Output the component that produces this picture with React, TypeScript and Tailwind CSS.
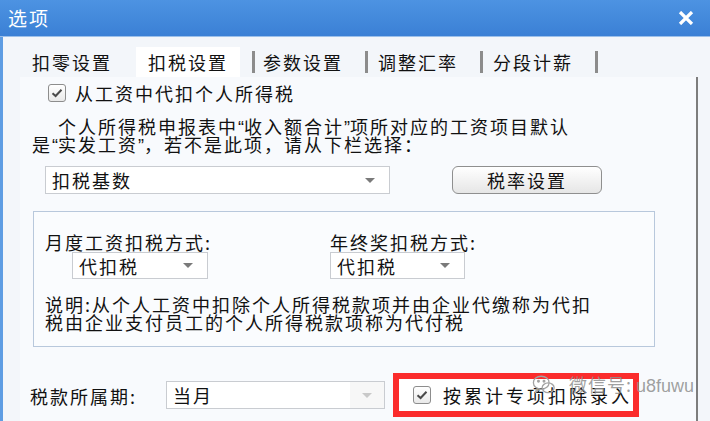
import React from "react";

const font = { fontFamily: '"Noto Sans CJK SC", "Liberation Sans", sans-serif' };

function CheckBox() {
  return (
    <span className="flex h-[18px] w-[18px] shrink-0 items-center justify-center rounded-[3px] border border-[#8d8d8d] bg-gradient-to-b from-white to-[#e9e9e9]">
      <svg width="12" height="10" viewBox="0 0 12 10">
        <path d="M1.5 5.2 L4.6 8 L10.5 1.8" fill="none" stroke="#4a4a4a" strokeWidth="2" />
      </svg>
    </span>
  );
}

function Arrow({ light = false }: { light?: boolean }) {
  return (
    <svg width="10" height="5" viewBox="0 0 10 5">
      <path d="M0 0 L10 0 L5 5 Z" fill={light ? "#c9c9c9" : "#7a7a7a"} />
    </svg>
  );
}

function Select({ value, className, arrowBox = false }: { value: string; className: string; arrowBox?: boolean }) {
  return (
    <div className={`flex items-center justify-between border border-[#c9ccd1] bg-white ${className}`}>
      <span className="pl-[6px] leading-none">{value}</span>
      {arrowBox ? (
        <span className="flex h-full w-[34px] items-center justify-center bg-[#f7f7f7]">
          <Arrow light />
        </span>
      ) : (
        <span className="pr-[14px]">
          <Arrow />
        </span>
      )}
    </div>
  );
}

function Tab({ label }: { label: string }) {
  return (
    <div className="flex h-full items-center">
      <span>{label}</span>
      <span className="ml-[22px] mr-[10px] h-[22px] w-[3px] bg-[#8c8c8c]" />
    </div>
  );
}

// narrow quote marks like the original dialog font
function Q({ c }: { c: string }) {
  return <span className="font-['Liberation_Sans'] leading-none tracking-[0px]">{c}</span>;
}

export default function App() {
  return (
    <div
      className="relative flex h-[421px] w-[710px] flex-col overflow-hidden bg-[#f3f6fa] text-[18px] tracking-[2px] text-[#111]"
      style={font}
    >
      {/* title bar */}
      <div className="flex h-[37px] shrink-0 items-center justify-between border-b border-[#9cc0ea] bg-gradient-to-b from-[#4d93e2] to-[#3b80d5] pl-[8px] pr-[16px]">
        <span className="text-[19px] text-white">选项</span>
        <svg width="16" height="14" viewBox="0 0 16 14">
          <path d="M2 1 L14 13 M14 1 L2 13" stroke="white" strokeWidth="3.2" />
        </svg>
      </div>

      <div className="flex flex-1">
        <div className="w-[3px] bg-[#5e9de3]" />
        <div className="flex flex-1 flex-col">
          {/* tabs */}
          <div className="flex h-[40px] shrink-0 items-stretch pl-[29px] pt-[10px]">
            <div className="flex h-full items-center">扣零设置</div>
            <div className="ml-[24px] flex h-full items-center">
              <div className="flex h-full items-center bg-white px-[12px]">扣税设置</div>
              <span className="ml-[12px] mr-[8px] h-[22px] w-[3px] bg-[#8c8c8c]" />
            </div>
            <Tab label="参数设置" />
            <Tab label="调整汇率" />
            <Tab label="分段计薪" />
          </div>

          {/* panel */}
          <div className="ml-[17px] flex w-[678px] flex-1 flex-col border-r-[2px] border-[#7d7d7d] bg-[#f8fafd]">
            <div className="ml-[28px] mt-[7px] flex h-[18px] items-center gap-[9px]">
              <CheckBox />
              <span className="leading-none">从工资中代扣个人所得税</span>
            </div>

            <div className="ml-[12px] mt-[15px] leading-[18px]">
              <div className="h-[18px] whitespace-nowrap pl-[26px]">
                个人所得税申报表中<Q c="“" />收入额合计<Q c="”" />项所对应的工资项目默认
              </div>
              <div className="h-[18px] whitespace-nowrap">
                是<Q c="“" />实发工资<Q c="”" />，若不是此项，请从下栏选择：
              </div>
            </div>

            <div className="ml-[25px] mt-[13px] flex items-center">
              <Select value="扣税基数" className="h-[28px] w-[345px]" />
              <button className="ml-[62px] h-[28px] w-[150px] rounded-[6px] border border-[#8f8f8f] bg-gradient-to-b from-white to-[#e6e6e6] leading-none">
                税率设置
              </button>
            </div>

            <div className="ml-[13px] mt-[17px] flex h-[136px] w-[622px] flex-col border border-[#b8c8dc] bg-[#fafcfe] pl-[11px] pt-[20px]">
              <div className="flex">
                <div className="flex w-[285px] flex-col">
                  <span className="leading-[20px]">月度工资扣税方式:</span>
                  <Select value="代扣税" className="ml-[27px] h-[27px] w-[136px]" />
                </div>
                <div className="flex flex-col">
                  <span className="leading-[20px]">年终奖扣税方式:</span>
                  <Select value="代扣税" className="h-[27px] w-[135px]" />
                </div>
              </div>
              <div className="mt-[16px] leading-[18px]">
                <div>说明:从个人工资中扣除个人所得税款项并由企业代缴称为代扣</div>
                <div>税由企业支付员工的个人所得税款项称为代付税</div>
              </div>
            </div>

            <div className="ml-[10px] mt-[26px] flex items-center">
              <span className="w-[136px] pt-[2px]">税款所属期:</span>
              <Select value="当月" className="h-[28px] w-[219px]" arrowBox />
              <div className="ml-[8px] flex h-[44px] w-[246px] items-center border-[6px] border-[#fb2c2c] bg-white pl-[14px]">
                <CheckBox />
                <span className="ml-[12px] leading-none tracking-[3px]">按累计专项扣除录入</span>
              </div>
            </div>
          </div>
        </div>
      </div>

      {/* watermark */}
      <div className="absolute left-[532px] top-[374px] flex items-center gap-[13px] whitespace-nowrap text-[#8f8f8f]/85">
        <svg width="24" height="22" viewBox="0 0 26 22" fill="none" stroke="#a3a3a3" strokeWidth="1.4">
          <ellipse cx="10" cy="8.5" rx="8.5" ry="7" />
          <path d="M5 15 L4 19 L8.5 15.4" />
          <ellipse cx="17.5" cy="14" rx="6.5" ry="5.2" />
          <circle cx="7" cy="7" r="0.9" fill="#a3a3a3" />
          <circle cx="13" cy="7" r="0.9" fill="#a3a3a3" />
        </svg>
        <span className="text-[18px] leading-none tracking-[1px]">
          微信号:<span className="ml-[4px] font-['Liberation_Sans'] tracking-[0px]">u8fuwu</span>
        </span>
      </div>
    </div>
  );
}
